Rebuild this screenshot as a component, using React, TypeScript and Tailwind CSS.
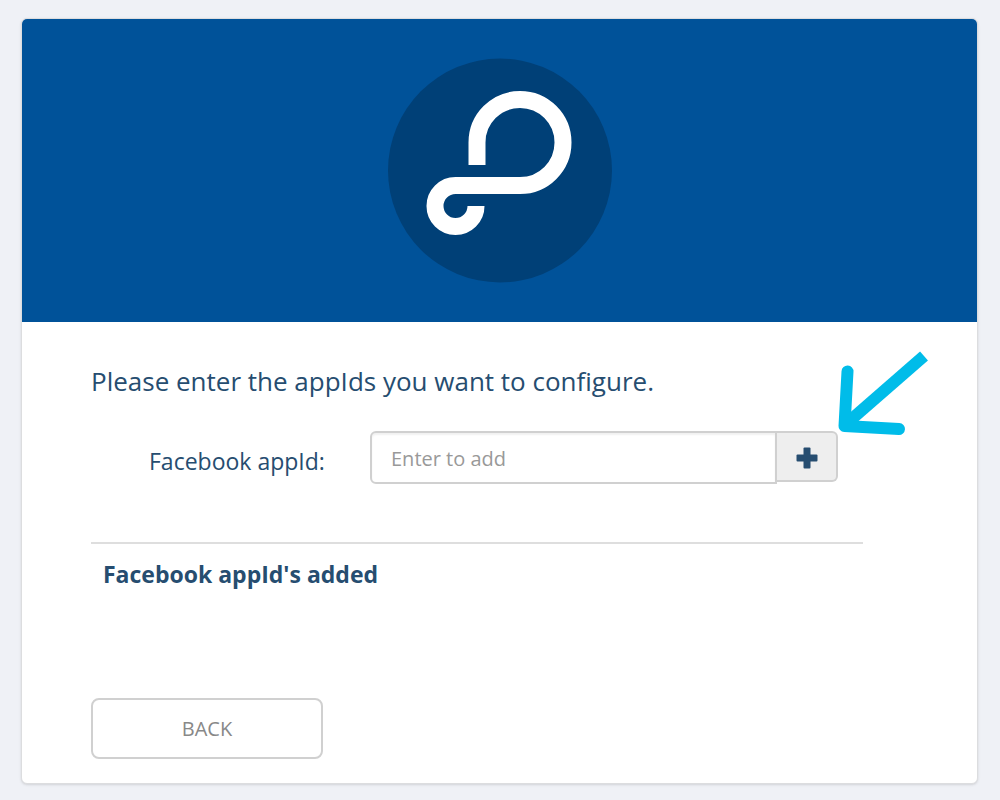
import { useState } from "react";

function Logo() {
  return (
    <svg viewBox="0 0 224 226" className="w-56 h-[226px]" fill="none" aria-hidden="true">
      <circle cx="112" cy="112.5" r="112" fill="#004077" />
      <path
        d="M89 107 V84.5 A43 43 0 1 1 132 127.5 H67.5 A20.5 20.5 0 1 0 88 148"
        stroke="#fff"
        strokeWidth="17"
      />
    </svg>
  );
}

function Arrow() {
  return (
    <svg
      viewBox="0 0 92 88"
      className="absolute left-full bottom-12 w-[92px] h-[88px]"
      fill="none"
      stroke="#00bce9"
      strokeWidth="12"
      aria-hidden="true"
    >
      <path d="M86 8 L8 76" />
      <path d="M9.500 23.500 L6.500 78 L61 81" strokeLinecap="round" strokeLinejoin="round" />
    </svg>
  );
}

export default function App() {
  const [appId, setAppId] = useState("");
  const [appIds, setAppIds] = useState<string[]>([]);

  const handleAdd = (e: React.FormEvent) => {
    e.preventDefault();
    if (!appId.trim()) return;
    setAppIds([...appIds, appId.trim()]);
    setAppId("");
  };

  return (
    <div className="min-h-screen bg-[#eff1f6] pl-[21px] pr-[22px] pt-[18px] pb-4 font-['Open_Sans','Noto_Sans',sans-serif] text-[#264d70]">
      <main className="rounded-md border border-[#dcdddf] bg-white shadow-sm overflow-hidden">
        <header className="flex justify-center bg-[#005299] pt-[39px] pb-[38px]">
          <Logo />
        </header>

        <div className="pl-[69px] pr-[114px] pt-[39px] pb-6">
          <h1 className="text-[26px] leading-10">
            Please enter the appIds you want to configure.
          </h1>

          <form
            onSubmit={handleAdd}
            className="relative mt-[30px] mr-[25px] flex items-start pl-[58px]"
          >
            <label htmlFor="appId" className="w-[221px] shrink-0 text-[23px] leading-[60px]">
              Facebook appId:
            </label>
            <div className="relative flex min-w-0 flex-1 items-start">
              <input
                id="appId"
                type="text"
                placeholder="Enter to add"
                value={appId}
                onChange={(e) => setAppId(e.target.value)}
                className="h-[53px] min-w-0 flex-1 rounded-l-md border-2 border-[#d0d0d0] bg-white px-[19px] pt-[2px] text-[20px] shadow-[inset_0_2px_2px_rgba(0,0,0,0.06)] outline-none placeholder:text-[#999]"
              />
              <button
                type="submit"
                aria-label="Add"
                className="flex h-[51px] w-[61px] items-center justify-center rounded-r-md border-2 border-l-0 border-[#d0d0d0] bg-[#eee] pt-[2px]"
              >
                <svg viewBox="0 0 22 22" className="h-[22px] w-[22px]" fill="#264d70" aria-hidden="true">
                  <rect x="0.500" y="7.500" width="21" height="7" rx="1" />
                  <rect x="7.500" y="0.500" width="7" height="21" rx="1" />
                </svg>
              </button>
              <Arrow />
            </div>
          </form>

          <section className="mt-[51px] min-h-[156px] border-t-2 border-[#dedede] px-3 pt-[10px]">
            <h2 className="text-[23px] leading-10 font-bold">Facebook appId's added</h2>
            <ul className="text-[20px]">
              {appIds.map((id) => (
                <li key={id}>{id}</li>
              ))}
            </ul>
          </section>

          <button
            type="button"
            className="h-[61px] w-[232px] rounded-lg border-2 border-[#d0d0d0] bg-white text-[20px] text-[#888]"
          >
            BACK
          </button>
        </div>
      </main>
    </div>
  );
}
